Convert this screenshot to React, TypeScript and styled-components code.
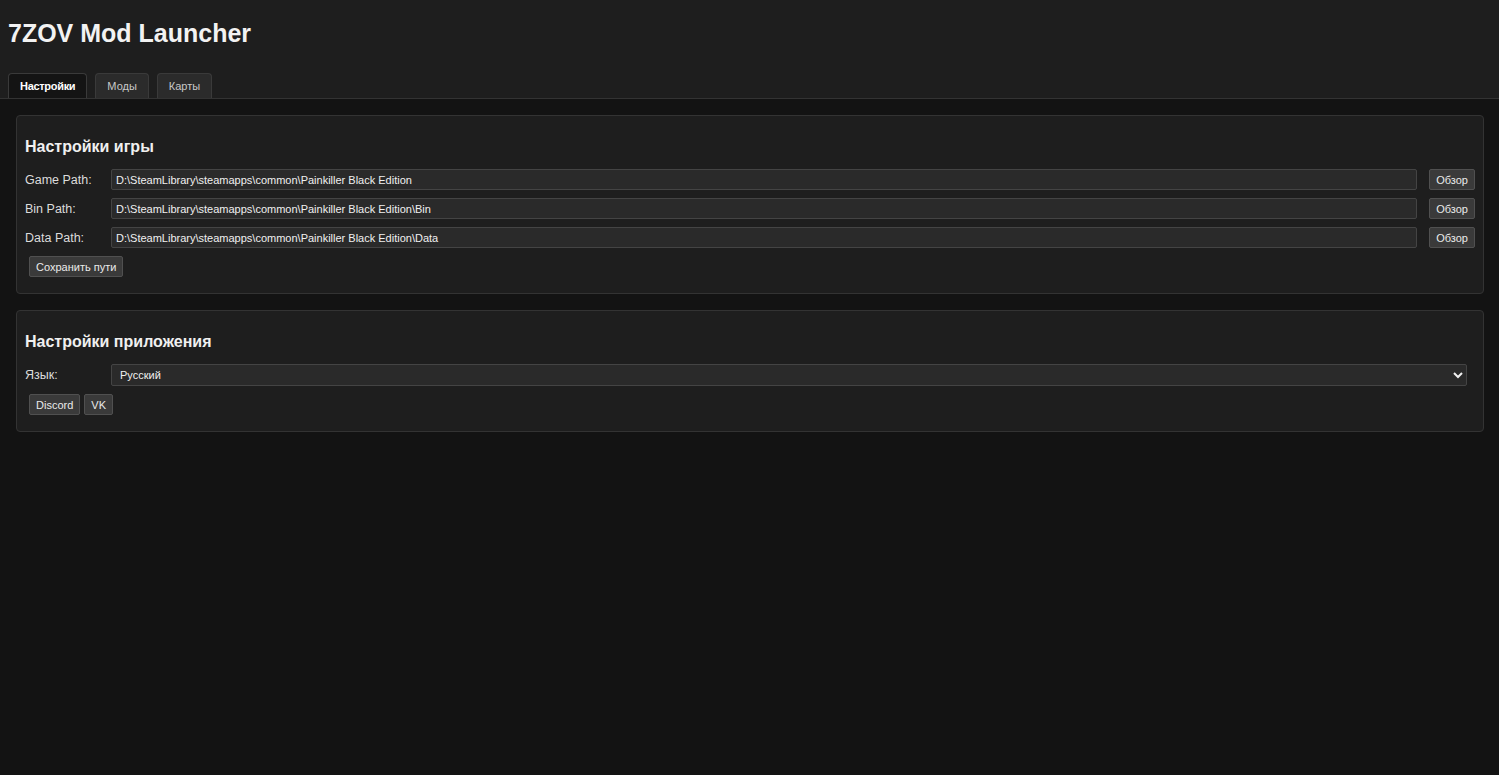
import React from 'react';
import styled, { createGlobalStyle } from 'styled-components';

const GlobalStyle = createGlobalStyle`
  html, body {
    margin: 0;
    padding: 0;
    background-color: #131313;
    color: #e6e6e6;
    font-family: 'Liberation Sans', Arial, sans-serif;
  }
`;

const Page = styled.div`
  min-height: 775px;
  background-color: #131313;
`;

const Header = styled.header`
  background-color: #1e1e1e;
  border-bottom: 1px solid #333;
  padding: 0 8px;
`;

const Title = styled.h1`
  margin: 0;
  padding: 17px 0 24px;
  font-size: 25px;
  line-height: 32px;
  font-weight: bold;
  color: #f2f2f2;
`;

const Tabs = styled.nav`
  display: flex;
  gap: 8px;
`;

const Tab = styled.button<{ $active?: boolean }>`
  height: 25px;
  padding: 0 11px;
  font-family: inherit;
  font-size: 11px;
  font-weight: ${(p) => (p.$active ? 'bold' : 'normal')};
  letter-spacing: ${(p) => (p.$active ? '-0.3px' : '0')};
  color: ${(p) => (p.$active ? '#fff' : '#c8c8c8')};
  background-color: ${(p) => (p.$active ? '#141414' : '#2b2b2b')};
  border: 1px solid #3a3a3a;
  border-bottom: none;
  border-radius: 4px 4px 0 0;
  cursor: pointer;
`;

const Content = styled.main`
  padding: 16px 15px 16px 16px;
  display: flex;
  flex-direction: column;
  gap: 16px;
`;

const Card = styled.section`
  background-color: #1e1e1e;
  border: 1px solid #333;
  border-radius: 4px;
  padding: 8px 8px 16px;
`;

const CardTitle = styled.h3`
  margin: 13px 0 12px;
  font-size: 16px;
  line-height: 20px;
  font-weight: bold;
  color: #f0f0f0;
`;

const Row = styled.div`
  display: flex;
  align-items: center;
  margin-bottom: 8px;
`;

const Label = styled.label`
  width: 86px;
  flex-shrink: 0;
  font-size: 12.5px;
  color: #dcdcdc;
`;

const TextInput = styled.input`
  flex: 1;
  height: 21px;
  box-sizing: border-box;
  padding: 0 4px;
  font-family: inherit;
  font-size: 11px;
  color: #f0f0f0;
  background-color: #2a2a2a;
  border: 1px solid #444;
  border-radius: 2px;
  outline: none;
`;

const Select = styled.select`
  flex: 1;
  margin-right: 8px;
  height: 22px;
  box-sizing: border-box;
  padding: 0 4px;
  font-family: inherit;
  font-size: 11px;
  color: #f0f0f0;
  background-color: #2a2a2a;
  border: 1px solid #444;
  border-radius: 2px;
  outline: none;
`;

const Button = styled.button<{ $side?: boolean }>`
  height: 21px;
  padding: 0 6px;
  margin-left: ${(p) => (p.$side ? '12px' : '0')};
  font-family: inherit;
  font-size: 11px;
  color: #eaeaea;
  background-color: #3a3a3a;
  border: 1px solid #505050;
  border-radius: 2px;
  cursor: pointer;
`;

const Actions = styled.div`
  display: flex;
  gap: 4px;
  padding-left: 4px;
`;

const paths = [
  { label: 'Game Path:', value: 'D:\\SteamLibrary\\steamapps\\common\\Painkiller Black Edition' },
  { label: 'Bin Path:', value: 'D:\\SteamLibrary\\steamapps\\common\\Painkiller Black Edition\\Bin' },
  { label: 'Data Path:', value: 'D:\\SteamLibrary\\steamapps\\common\\Painkiller Black Edition\\Data' },
];

const App = () => {
  return (
    <Page>
      <GlobalStyle />
      <Header>
        <Title>7ZOV Mod Launcher</Title>
        <Tabs>
          <Tab $active>Настройки</Tab>
          <Tab>Моды</Tab>
          <Tab>Карты</Tab>
        </Tabs>
      </Header>
      <Content>
        <Card>
          <CardTitle>Настройки игры</CardTitle>
          {paths.map((p) => (
            <Row key={p.label}>
              <Label>{p.label}</Label>
              <TextInput defaultValue={p.value} />
              <Button $side>Обзор</Button>
            </Row>
          ))}
          <Actions>
            <Button>Сохранить пути</Button>
          </Actions>
        </Card>
        <Card>
          <CardTitle>Настройки приложения</CardTitle>
          <Row>
            <Label>Язык:</Label>
            <Select defaultValue="ru">
              <option value="ru">Русский</option>
              <option value="en">English</option>
            </Select>
          </Row>
          <Actions>
            <Button>Discord</Button>
            <Button>VK</Button>
          </Actions>
        </Card>
      </Content>
    </Page>
  );
};

export default App;
